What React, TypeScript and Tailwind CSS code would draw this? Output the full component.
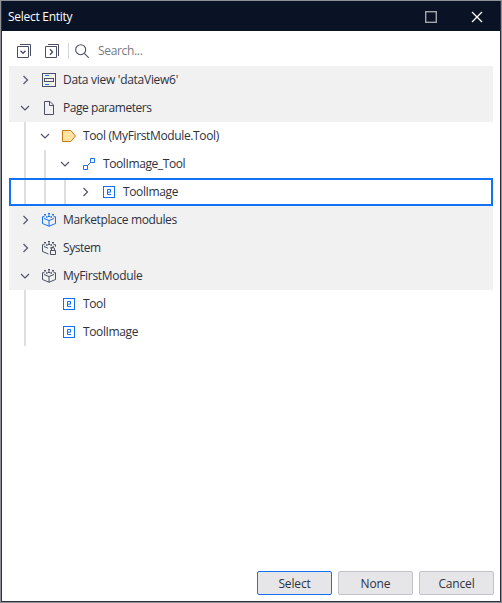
import React from "react";

const INK = "#4a4f63";
const BLUE = "#1470f5";

function Chevron({ open }: { open: boolean }) {
  return (
    <svg width="12" height="12" viewBox="0 0 12 12" fill="none" stroke="#50546a" strokeWidth="1.2">
      {open ? <path d="M2 4 6 8 10 4" /> : <path d="M4.5 2 8.5 6 4.5 10" />}
    </svg>
  );
}

function DataViewIcon() {
  return (
    <svg width="16" height="16" viewBox="0 0 16 16" fill="none" stroke={INK}>
      <rect x="1.5" y="1.5" width="13" height="13" />
      <rect x="3.5" y="6.5" width="9" height="3" />
      <path d="M4 3.5h4M4 12.5h4" stroke={BLUE} />
    </svg>
  );
}

function PageIcon() {
  return (
    <svg width="16" height="16" viewBox="0 0 16 16" fill="none" stroke={INK}>
      <path d="M3.5 1.5h5.5l3.5 3.5v9.5h-9zM8.5 1.5v4h4" />
    </svg>
  );
}

function TagIcon() {
  return (
    <svg width="16" height="16" viewBox="0 0 16 16" fill="#ffe3a3" stroke="#c67a0c">
      <path d="M1.5 2.5h8.3L14.5 8l-4.7 5.5H1.5z" />
    </svg>
  );
}

function AssociationIcon() {
  return (
    <svg width="16" height="16" viewBox="0 0 16 16" fill="none" stroke={BLUE}>
      <path d="M6.5 9.5 9.5 6.5" stroke={INK} />
      <path d="M2.5 9.5h4v4h-4zM9.5 2.5h4v4h-4z" />
    </svg>
  );
}

function EntityIcon() {
  return (
    <svg width="16" height="16" viewBox="0 0 16 16" fill="none" stroke={BLUE}>
      <rect x="2.5" y="2.5" width="11" height="11" />
      <path d="M6.5 8.2h3V5.5h-3v5H10" />
    </svg>
  );
}

function ModuleIcon({ color, locked }: { color: string; locked?: boolean }) {
  return (
    <svg width="16" height="16" viewBox="0 0 16 16" fill="none" stroke={color}>
      <path d="M3 2.8h2M7 1.8h2M11 2.8h2M5 5h1.6M9.4 5H11M7 4.3h2" strokeWidth="1.6" />
      <path
        d={
          locked
            ? "M3.5 4.7h-2v6.8L7.5 14M3 6.5 7 8.2M9 8.2l4-1.7M12.5 4.7h2v2"
            : "M3.5 4.7h-2v6.8L8 14.2l6.5-2.7V4.7h-2M3 6.5 8 8.5l5-2M8 8.5v5.7"
        }
      />
      {locked && <path d="M9.5 10.5h5v4h-5zM10.5 10.5V9a1.5 1.5 0 0 1 3 0v1.5" />}
    </svg>
  );
}

function StackIcon({ open }: { open: boolean }) {
  return (
    <svg width="16" height="16" viewBox="0 0 16 16" fill="none" stroke={INK}>
      <path d="M1.5 3.5h11v11h-11zM4 1.5h10.5V13" />
      {open ? <path d="M4.5 7.8 7 10.2l2.5-2.4" strokeWidth="1.4" /> : <path d="M6 6.3 8.5 9 6 11.7" strokeWidth="1.4" />}
    </svg>
  );
}

type Item = {
  label: string;
  tracking: string;
  depth: number;
  icon: React.ReactNode;
  open?: boolean;
  selected?: boolean;
};

const items: Item[] = [
  { label: "Data view 'dataView6'", tracking: "tracking-[-0.28px]", depth: 0, icon: <DataViewIcon />, open: false },
  { label: "Page parameters", tracking: "tracking-[-0.45px]", depth: 0, icon: <PageIcon />, open: true },
  { label: "Tool (MyFirstModule.Tool)", tracking: "tracking-[-0.36px]", depth: 1, icon: <TagIcon />, open: true },
  { label: "ToolImage_Tool", tracking: "tracking-[-0.4px]", depth: 2, icon: <AssociationIcon />, open: true },
  { label: "ToolImage", tracking: "tracking-[-0.38px]", depth: 3, icon: <EntityIcon />, open: false, selected: true },
  { label: "Marketplace modules", tracking: "tracking-[-0.37px]", depth: 0, icon: <ModuleIcon color={BLUE} />, open: false },
  { label: "System", tracking: "tracking-[-0.45px]", depth: 0, icon: <ModuleIcon color={INK} locked />, open: false },
  { label: "MyFirstModule", tracking: "tracking-[-0.3px]", depth: 0, icon: <ModuleIcon color={INK} />, open: true },
  { label: "Tool", tracking: "tracking-[-0.38px]", depth: 1, icon: <EntityIcon /> },
  { label: "ToolImage", tracking: "tracking-[-0.38px]", depth: 1, icon: <EntityIcon /> },
];

function Row({ item }: { item: Item }) {
  return (
    <div
      className={`flex h-7 items-center pl-1.5 ${item.depth === 0 ? "bg-[#f1f1f1]" : "bg-white"} ${
        item.selected ? "outline-2 -outline-offset-2 outline-[#1470f5]" : ""
      }`}
    >
      {Array.from({ length: item.depth }, (_, i) => (
        <div key={i} className="flex h-full w-5 justify-center">
          <div className="w-0.5 bg-[#dedede]" />
        </div>
      ))}
      <div className="flex w-5 justify-center">{item.open !== undefined && <Chevron open={item.open} />}</div>
      <div className="ml-1.5 w-4">{item.icon}</div>
      <span className={`ml-1.5 whitespace-nowrap ${item.tracking}`}>{item.label}</span>
    </div>
  );
}

export default function App() {
  return (
    <div className="flex h-[603px] w-[502px] flex-col border border-[#8f9196] bg-white font-['Open_Sans','Noto_Sans',sans-serif] text-[12px] leading-4 text-[#2d3142]">
      <div className="flex flex-1 flex-col border border-t-0 border-[#2a3142]">
        <header className="flex h-[30px] items-center bg-[#0a1325] pl-1.5 pt-0.5 text-white">
          <span className="tracking-[-0.28px]">Select Entity</span>
          <svg className="ml-auto" width="12" height="12" fill="none" stroke="#a3a6ad" strokeWidth="1.4">
            <rect x="0.7" y="0.7" width="10.6" height="10.6" />
          </svg>
          <svg className="mr-[17px] ml-[34px]" width="12" height="12" fill="none" stroke="#fff" strokeWidth="1.3">
            <path d="M1 1 11 11M11 1 1 11" />
          </svg>
        </header>
        <div className="flex h-[35px] items-center pl-3.5 pt-[5px]">
          <StackIcon open />
          <div className="ml-3">
            <StackIcon open={false} />
          </div>
          <div className="ml-2 h-4 w-px bg-[#d4d5d8]" />
          <svg className="ml-[5px]" width="16" height="16" viewBox="0 0 16 16" fill="none" stroke={INK} strokeWidth="1.1">
            <circle cx="6.7" cy="6.7" r="5" />
            <path d="m10.3 10.3 4.5 4.5" />
          </svg>
          <span className="ml-2 tracking-[-0.33px] text-[#777a85]">Search...</span>
        </div>
        <main className="mx-[7px] flex-1">
          {items.map((item, i) => (
            <Row key={i} item={item} />
          ))}
        </main>
        <footer className="flex justify-end gap-1.5 pb-1.5 pr-1.5 tracking-[-0.15px]">
          <button className="h-6 w-[75px] rounded-[2px] border border-[#1470f5] bg-[#e6e6e8] pt-0.5">Select</button>
          <button className="h-6 w-[75px] rounded-[2px] border border-[#c1c2c8] bg-[#e6e6e8] pt-0.5">None</button>
          <button className="h-6 w-[75px] rounded-[2px] border border-[#c1c2c8] bg-[#e6e6e8] pt-0.5">Cancel</button>
        </footer>
      </div>
    </div>
  );
}
